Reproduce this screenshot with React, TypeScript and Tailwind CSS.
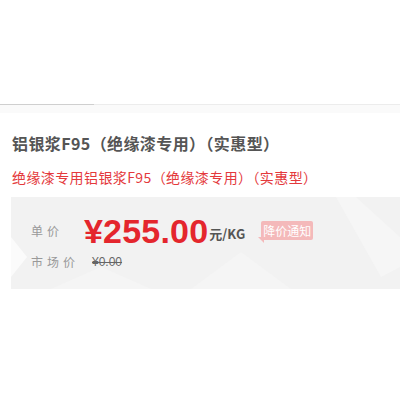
import React from "react";

const cjk = "font-['Microsoft_YaHei','Noto_Sans_CJK_SC',sans-serif]";

function PriceBox() {
  return (
    <div className="relative ml-[11px] mt-[10px] h-[92px] bg-[#f2f2f2] overflow-hidden">
      {/* faint background shapes */}
      <svg className="absolute inset-0" width="389" height="92" viewBox="0 0 389 92">
        <polygon points="0,40 16,60 0,80" fill="#fbfbfb" />
        <polygon points="325,0 345,0 389,40 389,70 370,80" fill="#f6f6f6" />
        <polygon points="180,92 230,55 280,92" fill="#f5f5f5" />
        <polygon points="40,92 90,70 140,92" fill="#f5f5f5" />
      </svg>

      <div className="relative flex flex-col pl-[20px] pt-[20px]">
        <div className="flex items-center h-[28px]">
          <span className="w-[53px] text-[12px] tracking-[4px] text-[#999]">单价</span>
          <span className="font-['Liberation_Sans',sans-serif] font-bold text-[34px] leading-none text-[#e4262d] tracking-[0.2px]">
            ¥255.00
          </span>
          <span className="ml-[1px] mt-[5px] text-[13px] font-bold text-[#555]">元/KG</span>
          <span className="relative ml-[16px] mt-[-2px] h-[19px] px-[2px] bg-[#f4b9ba] text-white text-[12px] leading-[19px] rounded-[2px]">
            降价通知
            <span className="absolute left-[-3px] bottom-[-3px] w-0 h-0 border-t-[6px] border-t-[#f4b9ba] border-l-[6px] border-l-transparent" />
          </span>
        </div>
        <div className="flex items-center mt-[6px] h-[22px]">
          <span className="w-[61px] text-[12px] tracking-[4px] text-[#999]">市场价</span>
          <span className="font-['Liberation_Sans',sans-serif] text-[12px] text-[#666] line-through">¥0.00</span>
        </div>
      </div>
    </div>
  );
}

function App() {
  return (
    <div className={`w-[400px] h-[400px] bg-white overflow-hidden ${cjk}`}>
      <div className="h-[104px]" />
      <div className="flex h-[1px]">
        <div className="w-[94px] bg-[#cfcfcf]" />
        <div className="flex-1 bg-[#ececec]" />
      </div>
      <div className="h-[8px] bg-[#fafafa]" />

      <h1 className="mt-[19px] pl-[12px] text-[16px] font-bold text-[#555] leading-[22px] tracking-[0.4px]">
        铝银浆F95（绝缘漆专用）（实惠型）
      </h1>
      <p className="mt-[13px] pl-[12px] text-[14px] text-[#e4393c] leading-[20px] tracking-[0.4px]">
        绝缘漆专用铝银浆F95（绝缘漆专用）（实惠型）
      </p>

      <PriceBox />
    </div>
  );
}

export default App;
